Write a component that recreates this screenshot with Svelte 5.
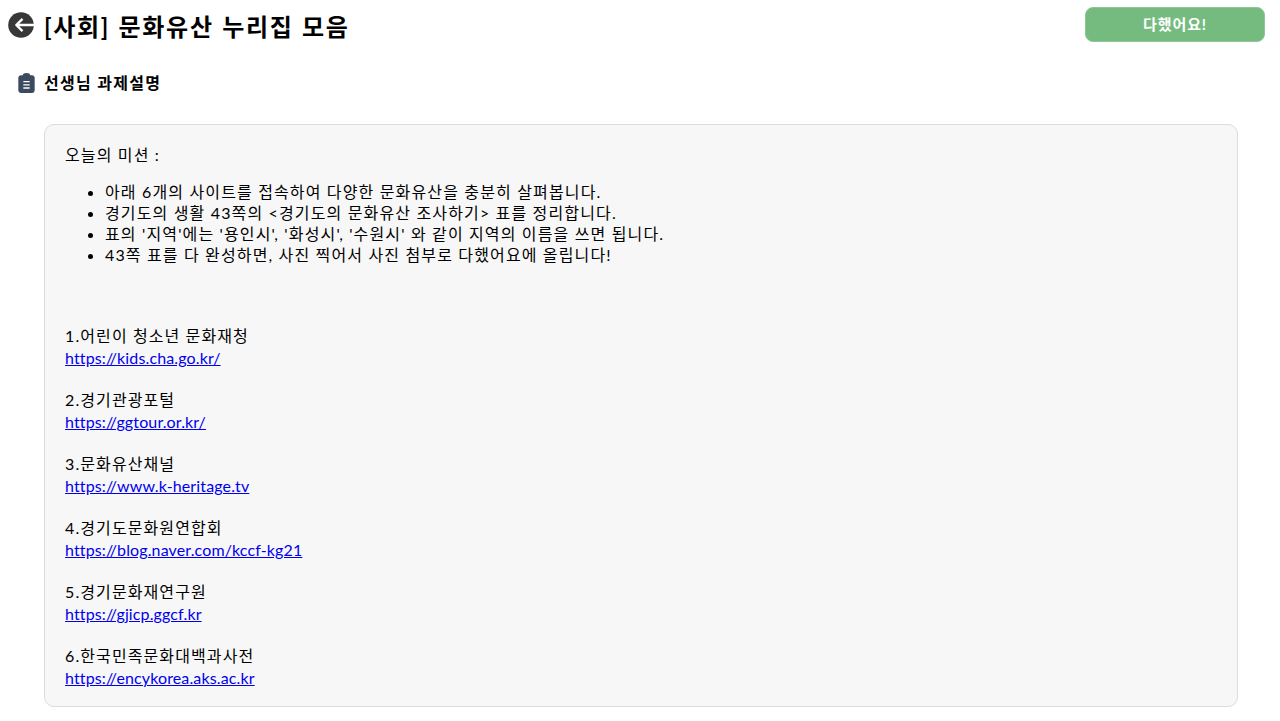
<script>
  const missions = [
    "아래 6개의 사이트를 접속하여 다양한 문화유산을 충분히 살펴봅니다.",
    "경기도의 생활 43쪽의 <경기도의 문화유산 조사하기> 표를 정리합니다.",
    "표의 '지역'에는 '용인시', '화성시', '수원시' 와 같이 지역의 이름을 쓰면 됩니다.",
    "43쪽 표를 다 완성하면, 사진 찍어서 사진 첨부로 다했어요에 올립니다!"
  ];
  const sites = [
    { name: "1.어린이 청소년 문화재청", url: "https://kids.cha.go.kr/" },
    { name: "2.경기관광포털", url: "https://ggtour.or.kr/" },
    { name: "3.문화유산채널", url: "https://www.k-heritage.tv" },
    { name: "4.경기도문화원연합회", url: "https://blog.naver.com/kccf-kg21" },
    { name: "5.경기문화재연구원", url: "https://gjicp.ggcf.kr" },
    { name: "6.한국민족문화대백과사전", url: "https://encykorea.aks.ac.kr" }
  ];
</script>

<div class="page">
  <header class="top">
    <div class="title">
      <svg class="back" viewBox="0 0 26 26" aria-hidden="true">
        <circle cx="13" cy="13" r="12.800" fill="#383838" />
        <path d="M26 13H9M14.500 6.800L8.300 13L14.500 19.200" fill="none" stroke="#fff" stroke-width="2.400" stroke-linejoin="round" />
      </svg>
      <h1>[사회] 문화유산 누리집 모음</h1>
    </div>
    <button class="done">다했어요!</button>
  </header>

  <div class="section">
    <svg class="clip" viewBox="0 0 18 22" aria-hidden="true">
      <path fill="#3b4a5f" d="M5 2.500C5 1 6.500 0 9 0s4 1 4 2.500h2c1.700 0 3 1.300 3 3V19c0 1.700-1.300 3-3 3H3c-1.700 0-3-1.300-3-3V5.500c0-1.700 1.300-3 3-3z" />
      <path fill="none" stroke="#fff" stroke-width="1.500" d="M5.500 9.500h7M5.500 13h7M5.500 16.500h7" />
    </svg>
    <h2>선생님 과제설명</h2>
  </div>

  <div class="panel">
    <p class="lead">오늘의 미션 :</p>
    <ul>
      {#each missions as m}
        <li>{m}</li>
      {/each}
    </ul>
    <div class="sites">
      {#each sites as s}
        <p class="site">
          <span class="name">{s.name}</span><br />
          <a href={s.url}>{s.url}</a>
        </p>
      {/each}
    </div>
  </div>
</div>

<style>
  :global(body) {
    margin: 0;
    background: #fff;
  }
  .page {
    font-family: Lato, "Noto Sans CJK KR", sans-serif;
    color: #000;
    padding: 7px 15px 0 8px;
    height: 714px;
    overflow: hidden;
  }
  .top {
    display: flex;
    justify-content: space-between;
    align-items: flex-start;
  }
  .title {
    display: flex;
    align-items: center;
    gap: 10px;
    height: 40px;
  }
  .back {
    width: 26px;
    height: 26px;
    margin-top: -5px;
  }
  h1 {
    margin: 0;
    font-size: 24px;
    line-height: 40px;
    font-weight: 700;
    letter-spacing: 1.7px;
    word-spacing: 1px;
  }
  .done {
    width: 180px;
    height: 35px;
    margin: 0;
    background: #75bb80;
    color: #fff;
    border: 1px solid #8cc795;
    border-radius: 8px;
    font: 700 15px Lato, "Noto Sans CJK KR", sans-serif;
    letter-spacing: 0.9px;
    padding: 0 0 3px;
  }
  .section {
    display: flex;
    align-items: center;
    gap: 9px;
    margin: 24px 0 0 10px;
    height: 24px;
  }
  .clip {
    width: 17px;
    height: 20px;
  }
  h2 {
    margin: 0;
    font-size: 16px;
    font-weight: 700;
    line-height: 24px;
    letter-spacing: 1.3px;
  }
  .panel {
    margin: 29px 27px 0 36px;
    height: 583px;
    box-sizing: border-box;
    background: #f7f7f7;
    border: 1px solid #dcdcdc;
    border-radius: 10px;
    padding: 19px 20px 0;
    font-size: 16px;
  }
  .lead {
    margin: 0;
    line-height: 21px;
    letter-spacing: 1.15px;
  }
  ul {
    margin: 16px 0 0;
    padding: 0 0 0 40px;
    line-height: 21px;
    letter-spacing: 1.15px;
  }
  .sites {
    margin-top: 59px;
  }
  .site {
    margin: 0 0 18px;
    line-height: 23px;
  }
  .name {
    letter-spacing: 1.1px;
  }
  a {
    color: #0000ee;
    text-decoration: underline;
    letter-spacing: 0.13px;
    position: relative;
    top: -1px;
  }
</style>
